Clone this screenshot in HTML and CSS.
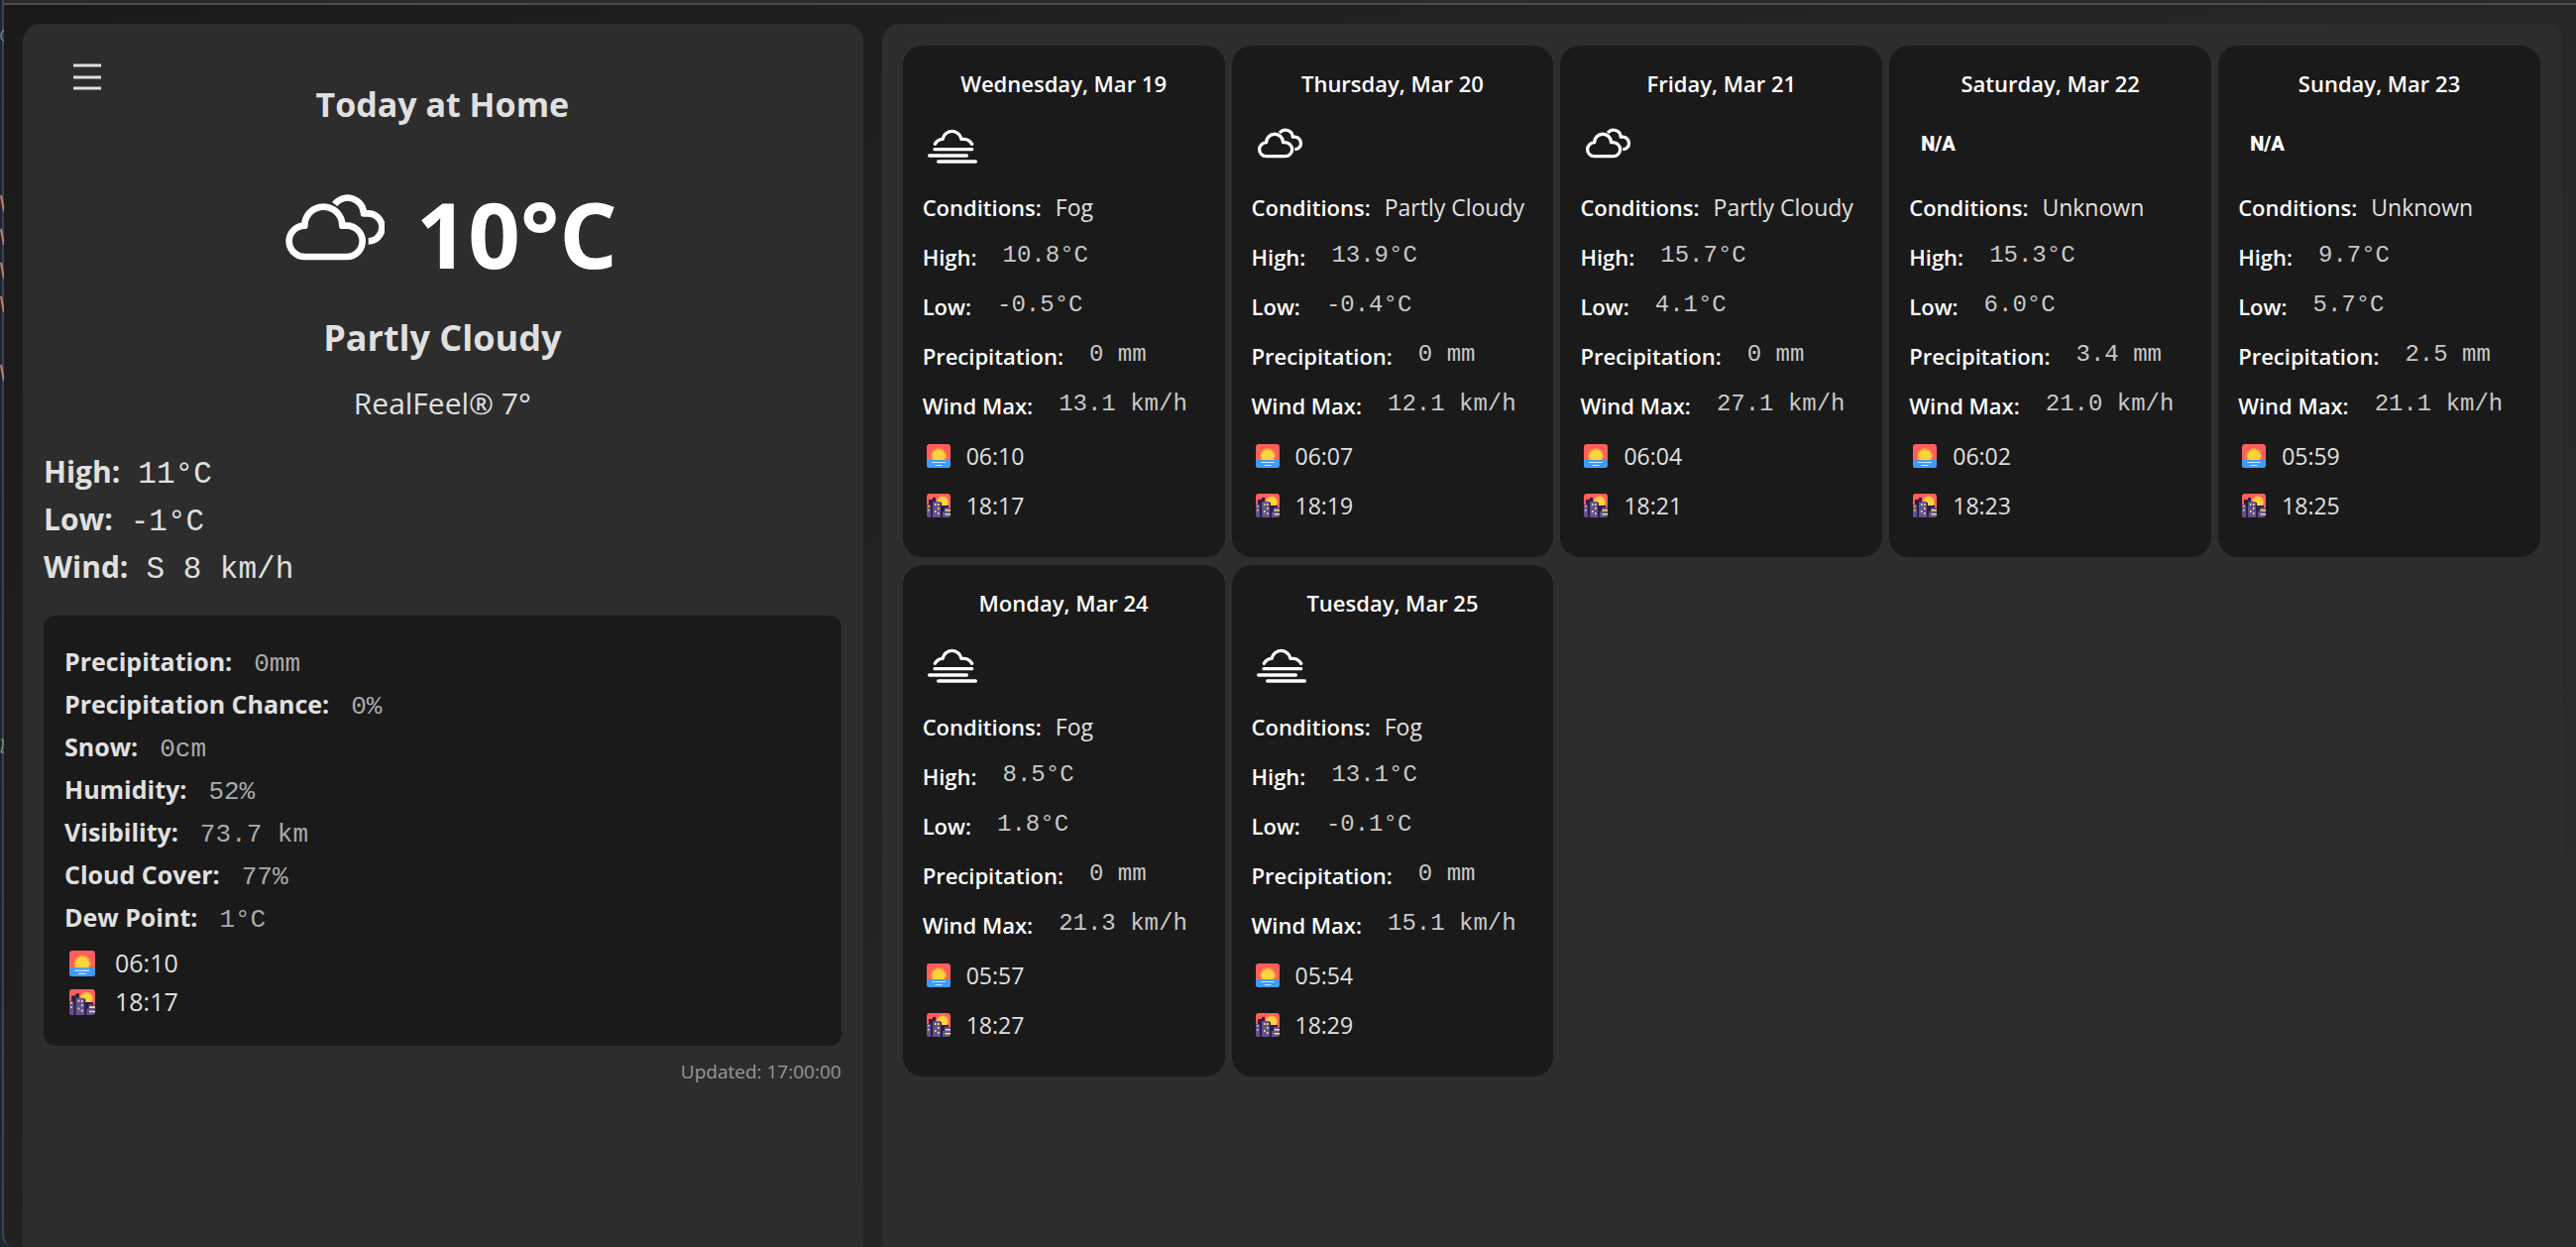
FILE: index.html
```
<!DOCTYPE html>
<html lang="en">
<head>
<meta charset="utf-8">
<meta name="viewport" content="width=device-width, initial-scale=1">
<title>Weather</title>
<link rel="stylesheet" href="styles.css">
</head>
<body>
<svg class="sprite" aria-hidden="true">
  <symbol id="cloudy" viewBox="14 -50 403 403">
    <g fill="none" stroke="#fff" stroke-width="22" stroke-linejoin="round">
      <path d="M112 237A47 47 0 0 1 112 143A57 57 0 0 1 226 143H240A47 47 0 0 1 240 237Z"/>
      <path d="M203 78A49 49 0 0 1 291 106H304A42 42 0 0 1 305 190"/>
    </g>
  </symbol>
  <symbol id="fog" viewBox="18 0 180 180">
    <g fill="none" stroke="#fff" stroke-width="10" stroke-linecap="round" stroke-linejoin="round">
      <path d="M55 91Q62 77 78 76A29 29 0 0 1 135 76H144Q159 77 167 91M54 107H167M38 126H151M65 144H178"/>
    </g>
  </symbol>
  <symbol id="sunrise" viewBox="0 0 24 24">
    <rect width="24" height="24" rx="3" fill="#ff5f5a"/>
    <circle cx="12" cy="12" r="7" fill="none" stroke="#fbab35" stroke-width="2" stroke-dasharray="2 1"/>
    <circle cx="12" cy="12" r="6.500" fill="#ffd33c"/>
    <path d="M0 16H24V21Q24 24 21 24H3Q0 24 0 21Z" fill="#3f9bfa"/>
    <path d="M5.500 18.500H18.500M9 21.500H15" stroke="#cfe6ff" stroke-width="1.200" stroke-linecap="round"/>
  </symbol>
  <symbol id="sunset" viewBox="0 0 24 24">
    <rect width="24" height="24" rx="3" fill="#ff5f5a"/>
    <circle cx="16" cy="8.500" r="6" fill="#fbb43a"/>
    <circle cx="16" cy="8.500" r="5" fill="#ffd33c"/>
    <path d="M2 6H6V4H9V9H15V12H22V15H24V21Q24 24 21 24H3L2 12Z" fill="#321b41"/>
    <path d="M0 11H4V24H3Q0 24 0 21ZM6 8H14V24H6ZM16 18H18V14H24V21Q24 24 21 24H16Z" fill="#5f5390"/>
    <path d="M8 10H9.500V12H8ZM11 10H12.500V12H11ZM11 14H12.500V16H11ZM8 17H9.500V19H8ZM11 19H12.500V21H11ZM1 12H2.500V13.500H1ZM1 16H2.500V17.500H1ZM18.500 16H24V17.500H18.500ZM18.500 20H24V21.500H18.500Z" fill="#ffe07a"/>
  </symbol>
</svg>
<div class="backdrop" aria-hidden="true">
  <svg width="4" height="900" viewBox="0 0 4 900">
    <g fill="none" stroke="#c77f66" stroke-width="2">
      <path d="M1 197L4 213M1 231L4 247M1 265L4 281M1 299L4 315M1 368L4 384"/>
    </g>
    <path d="M4 31Q1 31 1 36T4 41" fill="none" stroke="#8fb6c9" stroke-width="1"/>
    <path d="M1 746H3V752L1 759H4" fill="none" stroke="#8fbf68" stroke-width="1"/>
  </svg>
</div>
<div class="window">
  <div class="titlebar"></div>
  <main class="page">
    <section class="panel today">
      <button class="menu" type="button" aria-label="Menu">
        <svg width="28" height="28" viewBox="0 0 28 28"><path d="M0 2H28M0 14H28M0 25H28" stroke="#e0e0e0" stroke-width="3"/></svg>
      </button>
      <h1 class="place">Today at Home</h1>
      <div class="now">
        <svg class="now-icon" viewBox="0 6 354 324" role="img" aria-label="Partly Cloudy">
          <g fill="none" stroke="#fff" stroke-width="20" stroke-linejoin="round">
            <path d="M112 237A47 47 0 0 1 112 143A57 57 0 0 1 226 143H240A47 47 0 0 1 240 237Z"/>
            <path d="M203 78A49 49 0 0 1 291 106H304A42 42 0 0 1 305 190"/>
          </g>
        </svg>
        <span class="now-temp">10°C</span>
      </div>
      <h2 class="sky">Partly Cloudy</h2>
      <p class="feel">RealFeel® 7°</p>
      <dl class="summary">
        <div><dt>High:</dt><dd>11°C</dd></div>
        <div><dt>Low:</dt><dd>-1°C</dd></div>
        <div><dt>Wind:</dt><dd>S 8 km/h</dd></div>
      </dl>
      <div class="details">
        <dl class="detail-list">
          <div><dt>Precipitation:</dt><dd>0mm</dd></div>
          <div><dt>Precipitation Chance:</dt><dd>0%</dd></div>
          <div><dt>Snow:</dt><dd>0cm</dd></div>
          <div><dt>Humidity:</dt><dd>52%</dd></div>
          <div><dt>Visibility:</dt><dd>73.7 km</dd></div>
          <div><dt>Cloud Cover:</dt><dd>77%</dd></div>
          <div><dt>Dew Point:</dt><dd>1°C</dd></div>
        </dl>
        <p class="sun"><svg><use href="#sunrise"/></svg>06:10</p>
        <p class="sun"><svg><use href="#sunset"/></svg>18:17</p>
      </div>
      <p class="updated">Updated: 17:00:00</p>
    </section>
    <section class="panel forecast">
      <article class="card">
        <h3>Wednesday, Mar 19</h3>
        <svg class="icon"><use href="#fog"/></svg>
        <dl><div><dt>Conditions:</dt><dd class="text">Fog</dd></div><div><dt>High:</dt><dd>10.8°C</dd></div><div><dt>Low:</dt><dd>-0.5°C</dd></div><div><dt>Precipitation:</dt><dd>0 mm</dd></div><div><dt>Wind Max:</dt><dd>13.1 km/h</dd></div></dl>
        <p class="sun"><svg><use href="#sunrise"/></svg>06:10</p>
        <p class="sun"><svg><use href="#sunset"/></svg>18:17</p>
      </article>
      <article class="card">
        <h3>Thursday, Mar 20</h3>
        <svg class="icon"><use href="#cloudy"/></svg>
        <dl><div><dt>Conditions:</dt><dd class="text">Partly Cloudy</dd></div><div><dt>High:</dt><dd>13.9°C</dd></div><div><dt>Low:</dt><dd>-0.4°C</dd></div><div><dt>Precipitation:</dt><dd>0 mm</dd></div><div><dt>Wind Max:</dt><dd>12.1 km/h</dd></div></dl>
        <p class="sun"><svg><use href="#sunrise"/></svg>06:07</p>
        <p class="sun"><svg><use href="#sunset"/></svg>18:19</p>
      </article>
      <article class="card">
        <h3>Friday, Mar 21</h3>
        <svg class="icon"><use href="#cloudy"/></svg>
        <dl><div><dt>Conditions:</dt><dd class="text">Partly Cloudy</dd></div><div><dt>High:</dt><dd>15.7°C</dd></div><div><dt>Low:</dt><dd>4.1°C</dd></div><div><dt>Precipitation:</dt><dd>0 mm</dd></div><div><dt>Wind Max:</dt><dd>27.1 km/h</dd></div></dl>
        <p class="sun"><svg><use href="#sunrise"/></svg>06:04</p>
        <p class="sun"><svg><use href="#sunset"/></svg>18:21</p>
      </article>
      <article class="card">
        <h3>Saturday, Mar 22</h3>
        <p class="icon missing">N/A</p>
        <dl><div><dt>Conditions:</dt><dd class="text">Unknown</dd></div><div><dt>High:</dt><dd>15.3°C</dd></div><div><dt>Low:</dt><dd>6.0°C</dd></div><div><dt>Precipitation:</dt><dd>3.4 mm</dd></div><div><dt>Wind Max:</dt><dd>21.0 km/h</dd></div></dl>
        <p class="sun"><svg><use href="#sunrise"/></svg>06:02</p>
        <p class="sun"><svg><use href="#sunset"/></svg>18:23</p>
      </article>
      <article class="card">
        <h3>Sunday, Mar 23</h3>
        <p class="icon missing">N/A</p>
        <dl><div><dt>Conditions:</dt><dd class="text">Unknown</dd></div><div><dt>High:</dt><dd>9.7°C</dd></div><div><dt>Low:</dt><dd>5.7°C</dd></div><div><dt>Precipitation:</dt><dd>2.5 mm</dd></div><div><dt>Wind Max:</dt><dd>21.1 km/h</dd></div></dl>
        <p class="sun"><svg><use href="#sunrise"/></svg>05:59</p>
        <p class="sun"><svg><use href="#sunset"/></svg>18:25</p>
      </article>
      <article class="card">
        <h3>Monday, Mar 24</h3>
        <svg class="icon"><use href="#fog"/></svg>
        <dl><div><dt>Conditions:</dt><dd class="text">Fog</dd></div><div><dt>High:</dt><dd>8.5°C</dd></div><div><dt>Low:</dt><dd>1.8°C</dd></div><div><dt>Precipitation:</dt><dd>0 mm</dd></div><div><dt>Wind Max:</dt><dd>21.3 km/h</dd></div></dl>
        <p class="sun"><svg><use href="#sunrise"/></svg>05:57</p>
        <p class="sun"><svg><use href="#sunset"/></svg>18:27</p>
      </article>
      <article class="card">
        <h3>Tuesday, Mar 25</h3>
        <svg class="icon"><use href="#fog"/></svg>
        <dl><div><dt>Conditions:</dt><dd class="text">Fog</dd></div><div><dt>High:</dt><dd>13.1°C</dd></div><div><dt>Low:</dt><dd>-0.1°C</dd></div><div><dt>Precipitation:</dt><dd>0 mm</dd></div><div><dt>Wind Max:</dt><dd>15.1 km/h</dd></div></dl>
        <p class="sun"><svg><use href="#sunrise"/></svg>05:54</p>
        <p class="sun"><svg><use href="#sunset"/></svg>18:29</p>
      </article>
    </section>
  </main>
</div>
</body>
</html>
```
FILE: styles.css
```
* { box-sizing: border-box; }

body {
  margin: 0;
  min-height: 100vh;
  display: flex;
  background: #1e2433;
  color: #e0e0e0;
  font-family: "Segoe UI", "Open Sans", "Noto Sans", sans-serif;
}

h1, h2, h3, p, dl, dd { margin: 0; }
dt { font-weight: 700; }
dd { font-family: "Courier New", "Liberation Mono", monospace; }
svg { display: block; flex: none; }
.sprite { position: absolute; width: 0; height: 0; }

/* Sliver of the window behind */
.backdrop { position: relative; width: 2px; flex: none; }
.backdrop svg { position: absolute; top: 0; left: 0; z-index: 1; }

.window {
  flex: 1;
  min-width: 0;
  display: flex;
  flex-direction: column;
  border-left: 2px solid #3f434d;
  border-bottom-left-radius: 12px;
  background: linear-gradient(135deg, #1a1a1a, #2d2d2d);
  overflow: hidden;
}

.titlebar {
  height: 5px;
  background: #2a2a2a;
  border-bottom: 2px solid #4c4c4c;
}

.page {
  flex: 1;
  display: grid;
  grid-template-columns: 1fr 2fr;
  gap: 19px;
  padding: 19px 14px 0 19px;
}

.panel {
  background: #2d2d2d;
  border-radius: 18px 18px 0 0;
  padding: 22px 22px 22px 21px;
}

/* Today */
.today { position: relative; }

.menu {
  position: absolute;
  top: 32px;
  left: 43px;
  padding: 8px;
  border: 0;
  background: none;
  cursor: pointer;
}

.place { margin-top: 35px; font-size: 34px; line-height: 48px; text-align: center; }

.now {
  display: flex;
  align-items: center;
  justify-content: center;
  gap: 32px;
  margin-top: 47px;
  color: #fff;
}
.now-icon { width: 118px; height: 108px; }
.now-temp { font-size: 92px; font-weight: 700; line-height: 120px; }

.sky { margin-top: 21px; font-size: 36px; line-height: 48px; text-align: center; }
.feel { margin-top: 22px; font-size: 30px; line-height: 40px; text-align: center; }

.summary { margin-top: 25px; font-size: 30px; line-height: 48px; }
.summary div { display: flex; align-items: baseline; gap: 18px; height: 48px; }
.summary dd { font-size: 31px; }

.details {
  margin-top: 25px;
  padding: 25px 21px;
  border-radius: 12px;
  background: #1a1a1a;
}
.detail-list { font-size: 25px; line-height: 43px; margin-bottom: 5px; }
.detail-list div { display: flex; align-items: baseline; gap: 22px; height: 43px; }
.detail-list dd { font-size: 26px; color: #aaa; }

.sun { display: flex; align-items: center; }
.details .sun { gap: 20px; padding-left: 5px; font-size: 25px; line-height: 39px; }
.details .sun svg { width: 26px; height: 26px; }

.updated { margin-top: 11px; font-size: 19px; line-height: 30px; text-align: right; color: #999; }

/* Forecast */
.forecast {
  display: grid;
  grid-template-columns: repeat(5, 1fr);
  align-content: start;
  gap: 8px 7px;
}

.card {
  padding: 21px 20px 27px;
  border-radius: 20px;
  background: #1a1a1a;
}
.card h3 {
  margin-bottom: 14px;
  font-size: 22px;
  font-weight: 600;
  line-height: 34px;
  text-align: center;
  color: #fff;
}
.icon { width: 60px; height: 60px; margin-bottom: 9px; }
.missing {
  padding-left: 12px;
  font-family: Roboto, sans-serif;
  font-size: 20px;
  font-weight: 900;
  line-height: 60px;
  color: #fff;
}
.card dl div { display: flex; align-items: flex-start; gap: 26px; height: 50px; }
.card dt { font-size: 22px; font-weight: 600; line-height: 50px; color: #fff; }
.card dd { font-size: 24px; line-height: 48px; color: #c8c8c8; }
.card dd.text {
  margin-left: -12px;
  font-family: "Segoe UI", "Open Sans", "Noto Sans", sans-serif;
  font-size: 23px;
  line-height: 50px;
  color: #e0e0e0;
}
.card .sun { gap: 16px; padding-left: 4px; font-size: 23px; line-height: 50px; }
.card dl { margin-bottom: 1px; }
.card .sun svg { width: 24px; height: 24px; }
```
